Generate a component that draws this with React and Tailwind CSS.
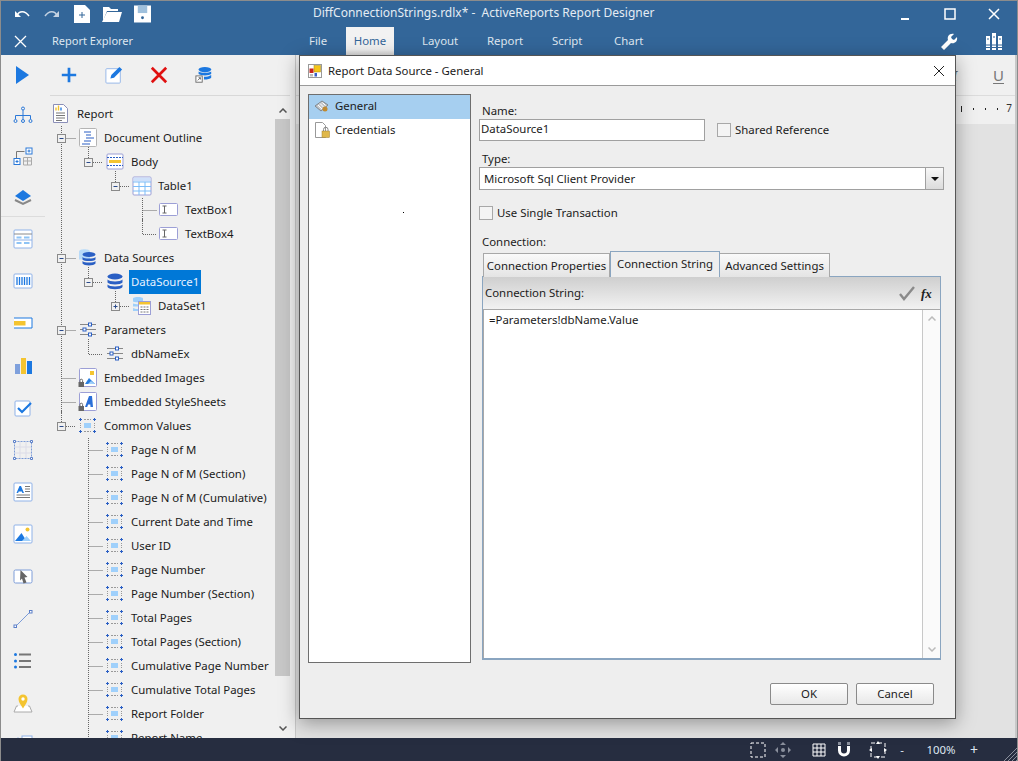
import React from 'react';

const font = "font-['Noto_Sans','Liberation_Sans',sans-serif]";

// tree icons, all drawn on a 20x20 box
const lav = '#9c9fd6';
const blue = '#2a5fc4';
const sky = '#9fd0fb';
const treeIcons = {
  report: (
    <>
      <path d="M2.500 .5h10l4 4v14h-14z" fill="#fff" stroke="#8b8fb8" />
      <path d="M5 6.500v-3M7.500 6.500v-5" stroke="#f4c430" strokeWidth="1.400" />
      <path d="M10 6.500v-3" stroke="#2a7fe0" strokeWidth="1.400" />
      <path d="M5 9h9M5 11.500h9M5 14h9M5 16.500h6" stroke="#777" />
    </>
  ),
  outline: (
    <>
      <rect x="1.500" y=".5" width="17" height="18" rx="1" fill="#fff" stroke="#b4b4b4" />
      <path d="M6 4h7M8 7h5M8 10h8M6 13h7M4 16h8" stroke={blue} strokeWidth="1.200" />
    </>
  ),
  body: (
    <>
      <rect x="2" y="2" width="16" height="15" rx="1" fill="#fff" stroke={lav} />
      <path d="M2 5.500h16M2 13.500h16" stroke={blue} strokeDasharray="2 1" />
      <rect x="4" y="8" width="12" height="3" fill="#f4c430" />
    </>
  ),
  table: (
    <>
      <rect x="1" y="1" width="18" height="18" rx="1" fill="#fff" stroke={lav} />
      <rect x="1.500" y="1.500" width="17" height="4" fill="#cfe0fa" />
      <path d="M1 6h18M1 10.500h18M1 15h18M7 6v13M13 6v13" stroke="#7dbdf8" />
    </>
  ),
  textbox: (
    <>
      <rect x=".5" y="3.500" width="18" height="12" rx="1" fill="#fff" stroke={lav} />
      <path d="M3.500 6h4M3.500 13h4M5.500 6v7" stroke="#666" />
    </>
  ),
  dbs: (
    <>
      <path d="M1 3.500c0-3 11-3 11 0v8H1z" fill={sky} opacity=".7" />
      <ellipse cx="11" cy="6.500" rx="6.500" ry="2.500" fill={blue} />
      <path d="M4.500 9c1.500 2 11.500 2 13 0v2.500c-1.500 2-11.500 2-13 0zM4.500 13c1.500 2 11.500 2 13 0v2.500c-1.500 2.500-11.500 2.500-13 0z" fill={blue} />
    </>
  ),
  db: (
    <>
      <ellipse cx="10" cy="4.500" rx="7.500" ry="3" fill={blue} />
      <path d="M2.500 7.500c1.500 2.500 13.500 2.500 15 0v3c-1.500 2.500-13.500 2.500-15 0zM2.500 12.500c1.500 2.500 13.500 2.500 15 0v2.500c-1.500 3-13.500 3-15 0z" fill={blue} />
    </>
  ),
  dataset: (
    <>
      <path d="M1 2.500c0-2 10-2 10 0v3c0 1-10 1-10 0zM1 7.500c2 1 8 1 10 0v3H1zM1 12c2 1 4 1 5 1v2H1z" fill={sky} />
      <rect x="6.500" y="5.500" width="12" height="13" fill="#fff" stroke={lav} />
      <rect x="7" y="6" width="11" height="2.500" fill="#f4c430" />
      <path d="M8.500 11h8M8.500 13.500h8M8.500 16h8" stroke="#777" strokeDasharray="2 1" />
    </>
  ),
  params: (
    <>
      <path d="M2 4.500h9M14 4.500h4M2 9.500h3M8 9.500h10M2 14.500h9M14 14.500h4" stroke="#888" />
      <rect x="10.500" y="3" width="3" height="3" fill="#fff" stroke={blue} />
      <rect x="5" y="8" width="3" height="3" fill="#fff" stroke={blue} />
      <rect x="10.500" y="13" width="3" height="3" fill="#fff" stroke={blue} />
    </>
  ),
  images: (
    <>
      <rect x="1.500" y=".5" width="17" height="18" rx="1" fill="#fff" stroke={lav} />
      <rect x="12" y="3" width="4" height="4" fill="#f4c430" />
      <path d="M7 16l4-6 6 6z" fill="#2a7fe0" />
      <path d="M10 16l3-3 4 3z" fill={sky} />
      <rect x=".5" y="14" width="5.500" height="5" fill="#666" />
      <path d="M2 14v-1.500a1.300 1.300 0 012.600 0V14" fill="none" stroke="#666" />
    </>
  ),
  sheets: (
    <>
      <rect x="1.500" y=".5" width="17" height="18" rx="1" fill="#fff" stroke={lav} />
      <path d="M7 15l4-11h3l1 11h-2.500l-.2-2.500h-2.200L9.200 15z" fill="#2a6fd8" />
      <rect x=".5" y="14" width="5.500" height="5" fill="#666" />
      <path d="M2 14v-1.500a1.300 1.300 0 012.600 0V14" fill="none" stroke="#666" />
    </>
  ),
  value: (
    <>
      <path d="M1 3.500h3M2.500 2v3M15 3.500h3M16.500 2v3M1 15.500h3M2.500 14v3M15 15.500h3M16.500 14v3" stroke={blue} />
      <path d="M6 3.500h7M6 15.500h7" stroke="#999" strokeDasharray="2 1" />
      <path d="M2.500 7v5M16.500 7v5" stroke="#999" strokeDasharray="1 1" />
      <rect x="6" y="7" width="7" height="5" fill={sky} />
    </>
  ),
};

function TreeIcon({ name }) {
  return (
    <svg className="w-5 h-5 shrink-0 overflow-visible" viewBox="0 0 20 20">
      {treeIcons[name]}
    </svg>
  );
}

// one 27px column of the tree lines: v = through, t = tee, e = elbow
function Guide({ kind, box }) {
  return (
    <svg className="w-[27px] h-6 shrink-0 overflow-visible" viewBox="0 0 27 24">
      <g stroke="#666" strokeDasharray="1 1" fill="none">
        {kind === 'v' && <path d="M13.500 0v24" />}
        {kind === 't' && <path d="M13.500 0v24M13.500 12.500H28" />}
        {kind === 'e' && <path d="M13.500 -3v15.500H28" />}
      </g>
      {box && (
        <g>
          <rect x="9.500" y="8.500" width="8" height="8" fill="#f0f0f0" stroke="#8a8a8a" />
          <path d="M11.500 12.500h4" stroke="#2a4a8a" />
          {box === '+' && <path d="M13.500 10.500v4" stroke="#2a4a8a" />}
        </g>
      )}
    </svg>
  );
}

const tree = [
  { g: [], icon: 'report', text: 'Report' },
  { g: ['t'], box: '-', icon: 'outline', text: 'Document Outline' },
  { g: ['v', 'e'], box: '-', icon: 'body', text: 'Body' },
  { g: ['v', '', 'e'], box: '-', icon: 'table', text: 'Table1' },
  { g: ['v', '', '', 't'], icon: 'textbox', text: 'TextBox1' },
  { g: ['v', '', '', 'e'], icon: 'textbox', text: 'TextBox4' },
  { g: ['t'], box: '-', icon: 'dbs', text: 'Data Sources' },
  { g: ['v', 'e'], box: '-', icon: 'db', text: 'DataSource1', selected: true },
  { g: ['v', '', 'e'], box: '+', icon: 'dataset', text: 'DataSet1' },
  { g: ['t'], box: '-', icon: 'params', text: 'Parameters' },
  { g: ['v', 'e'], icon: 'params', text: 'dbNameEx' },
  { g: ['t'], icon: 'images', text: 'Embedded Images' },
  { g: ['t'], icon: 'sheets', text: 'Embedded StyleSheets' },
  { g: ['e'], box: '-', icon: 'value', text: 'Common Values' },
  ...[
    'Page N of M',
    'Page N of M (Section)',
    'Page N of M (Cumulative)',
    'Current Date and Time',
    'User ID',
    'Page Number',
    'Page Number (Section)',
    'Total Pages',
    'Total Pages (Section)',
    'Cumulative Page Number',
    'Cumulative Total Pages',
    'Report Folder',
    'Report Name',
  ].map((text) => ({ g: ['', 't'], icon: 'value', text })),
];

function TreeRow({ row }) {
  return (
    <div className="flex items-center h-6 shrink-0">
      {row.g.map((kind, i) => (
        <Guide key={i} kind={kind} box={i === row.g.length - 1 ? row.box : null} />
      ))}
      <div className="ml-[3px]">
        <TreeIcon name={row.icon} />
      </div>
      <span
        className={
          row.selected
            ? 'ml-[4px] px-[2px] h-6 leading-6 bg-[#0078d7] text-[#e8f2ff] whitespace-nowrap'
            : 'ml-[6px] whitespace-nowrap text-[#1b1b1b]'
        }
      >
        {row.text}
      </span>
    </div>
  );
}

// left rail drawings on a 20x20 box
const railIcons = [
  <path key="a" d="M3 1l13 9-13 9z" fill="#1c78e0" />,
  <g key="b" fill="none" stroke="#2a78d8">
    <circle cx="10" cy="2.500" r="1.500" />
    <path d="M10 4v5M2.500 13V9.500h15V13M10 9v4" />
    <circle cx="2.500" cy="15" r="1.500" />
    <circle cx="10" cy="15" r="1.500" />
    <circle cx="17.500" cy="15" r="1.500" />
  </g>,
  <g key="c" fill="none">
    <path d="M3.500 12V5.500h8" stroke="#777" />
    <rect x="13" y="2" width="6" height="6" stroke="#2a78d8" fill="#fff" />
    <rect x="1" y="12.500" width="6" height="6" stroke="#2a78d8" fill="#fff" />
    <path d="M14.500 5h3M16 3.500v3M2.500 15.500h3M4 14v3" stroke="#2a78d8" />
    <path d="M10.500 11.500h8v7.500h-8zM14.500 11.500v7.500M10.500 15h8" stroke="#aaa" />
  </g>,
  <g key="d">
    <path d="M2 13l8 4 8-4" fill="none" stroke="#888" strokeWidth="2" />
    <path d="M10 3l8 6-8 5-8-5z" fill="#1c78e0" />
  </g>,
  <g key="e">
    <rect x="1" y="1" width="18" height="18" rx="1" fill="#fff" stroke="#8fb2e8" />
    <path d="M1 5h18" stroke="#8a8a8a" />
    <path d="M3.500 8.500h5M11 8.500h5.500M3.500 14h5M11 14h5.500" stroke="#8fc4f5" strokeWidth="2" />
    <path d="M1 11h18" stroke="#8fb2e8" />
  </g>,
  <g key="f">
    <rect x="1" y="3" width="18" height="14" rx="1" fill="#fff" stroke="#8fb2e8" />
    <path d="M4 6v8M6.500 6v8M9 6v8M11.500 6v8M14 6v8M16.500 6v8" stroke="#1c78e0" strokeWidth="1.300" />
  </g>,
  <g key="g">
    <path d="M1 5h18v10H1" fill="#fff" stroke="#1c78e0" />
    <rect x="1" y="8" width="11.500" height="4.500" fill="#f4c430" />
  </g>,
  <g key="h">
    <rect x="2" y="8" width="5" height="10" fill="#7fa0dc" />
    <rect x="8" y="2" width="5" height="16" fill="#f4c430" />
    <rect x="14" y="5" width="5" height="13" fill="#1c78e0" />
  </g>,
  <g key="i">
    <rect x="2" y="3" width="15" height="15" rx="1" fill="#fff" stroke="#8fb2e8" />
    <path d="M5 10l4 4 9-9" fill="none" stroke="#1c78e0" strokeWidth="2.200" />
  </g>,
  <g key="j" fill="none">
    <rect x="1.500" y="1.500" width="17" height="17" stroke="#7c9cd8" strokeDasharray="2 1" />
    <path d="M7 2v16M13 2v16M2 7h16M2 13h16" stroke="#dcdce8" />
    <path d="M.5.500h2v2h-2zM17.500.500h2v2h-2zM.5 17.500h2v2h-2zM17.500 17.500h2v2h-2z" stroke="#5b7fc8" fill="#fff" />
  </g>,
  <g key="k">
    <rect x="1" y="1" width="18" height="18" rx="1" fill="#fff" stroke="#8fb2e8" />
    <path d="M3.500 11l3-7h1.500l3 7h-1.600l-.6-1.500H5.700L5.100 11z" fill="#1c78e0" />
    <path d="M12 4.500h5M12 7h5M12 9.500h5M3.500 13h13.500M3.500 15.500h13.500" stroke="#777" />
  </g>,
  <g key="l">
    <rect x="1" y="1" width="18" height="18" rx="1" fill="#fff" stroke="#8fb2e8" />
    <circle cx="14.500" cy="5.500" r="2" fill="#f4c430" />
    <path d="M2 17l6.500-8 5 8z" fill="#1c78e0" />
    <path d="M9 17l4.500-5 4.500 5z" fill="#9fd0fb" />
  </g>,
  <g key="m">
    <rect x="1" y="3" width="18" height="13" rx="1.500" fill="#fff" stroke="#7c9cd8" />
    <path d="M7.500 3l7 7-3 .5 2 5-3 1-1.500-5-2 2z" fill="#666" />
  </g>,
  <g key="n" fill="none">
    <path d="M3 17L17 3" stroke="#7c9cd8" />
    <rect x="1" y="16" width="2.500" height="2.500" stroke="#5b7fc8" fill="#fff" />
    <rect x="16.500" y="1.500" width="2.500" height="2.500" stroke="#5b7fc8" fill="#fff" />
  </g>,
  <g key="o">
    <circle cx="2.500" cy="3.500" r="1.500" fill="#1c78e0" />
    <circle cx="2.500" cy="10" r="1.500" fill="#1c78e0" />
    <circle cx="2.500" cy="16" r="1.500" fill="#1c78e0" />
    <path d="M6 3.500h12M6 10h12M6 16h12" stroke="#777" strokeWidth="2" />
  </g>,
  <g key="p">
    <path d="M5 13H3.500L1 19h18l-2.500-6H15" fill="#fff" stroke="#aaa" />
    <path d="M10 15.500C8 12 5.500 9.500 5.500 6a4.500 4.500 0 019 0c0 3.500-2.500 6-4.500 9.500z" fill="#f4c430" />
    <circle cx="10" cy="6" r="1.700" fill="#fff" />
  </g>,
  <g key="q">
    <rect x="9" y="1" width="10" height="8" fill="#fff" stroke="#8fb2e8" />
    <path d="M1 8l4-6 4 6z" fill="#8fb2e8" />
  </g>,
];

function Tool({ children }) {
  return (
    <svg className="w-[18px] h-[18px]" viewBox="0 0 20 20">
      {children}
    </svg>
  );
}

function Check({ className }) {
  return <span className={'w-[14px] h-[14px] border border-[#a8a8a8] bg-[#f4f4f4] block ' + className} />;
}

function Dialog() {
  return (
    <div className="absolute left-[298px] top-[54px] w-[657px] h-[664px] flex flex-col bg-[#eeeeee] border border-[#555] shadow-[0_4px_18px_rgba(0,0,0,0.35)] text-[#1b1b1b]">
      <div className="h-[30px] shrink-0 bg-white border-b border-[#9a9a9a] flex items-center pl-[8px] pr-[10px]">
        <svg className="w-[14px] h-[14px]" viewBox="0 0 14 14">
          <rect x=".5" y=".5" width="13" height="13" fill="#fff" stroke="#999" />
          <rect x="6" y="1.500" width="6.500" height="6.500" fill="#f5c518" stroke="#a88a10" strokeWidth=".5" />
          <rect x="1.500" y="4.500" width="4" height="4.500" fill="#c8251d" />
          <rect x="6.500" y="9" width="2.500" height="3.500" fill="#3a5fc8" />
          <rect x="2" y="10" width="3" height="2.500" fill="#bbb" />
        </svg>
        <span className="ml-[6px]">Report Data Source - General</span>
        <svg className="ml-auto w-3 h-3" viewBox="0 0 12 12">
          <path d="M1 1l10 10M11 1L1 11" stroke="#222" fill="none" />
        </svg>
      </div>
      <div className="flex-1 flex pl-[8px] pt-[8px] min-h-0">
        <div className="w-[163px] h-[569px] shrink-0 bg-white border border-[#6e6e6e] flex flex-col">
          <div className="h-6 shrink-0 bg-[#a6cff0] flex items-center pl-[5px] pb-[2px]">
            <svg className="w-[16px] h-[16px]" viewBox="0 0 16 16">
              <path d="M1 8l7-5 6 4-7 6z" fill="#c4c8cc" stroke="#80868c" />
              <path d="M4 7l4 4M6 5.500l4 4M8.500 4.500l3 3" stroke="#fff" />
              <circle cx="11" cy="11" r="2.500" fill="#c08a30" />
            </svg>
            <span className="ml-[5px]">General</span>
          </div>
          <div className="h-6 shrink-0 flex items-center pl-[5px] pb-[2px]">
            <svg className="w-[16px] h-[16px]" viewBox="0 0 16 16">
              <path d="M1.500 .5h7l3 3v12h-10z" fill="#fff" stroke="#999" />
              <rect x="8" y="9" width="7.500" height="6.500" fill="#e0b84a" stroke="#a08030" strokeWidth=".5" />
              <path d="M9.500 9V7.500a2.200 2.200 0 014.500 0V9" fill="none" stroke="#888" />
            </svg>
            <span className="ml-[5px]">Credentials</span>
          </div>
          <div className="ml-[94px] mt-[69px] w-px h-px bg-black" />
        </div>
        <div className="flex-1 pl-[8px] flex flex-col min-w-0">
          <div className="pl-[3px] h-[17px] leading-[17px] mt-[8px]">Name:</div>
          <div className="flex items-center">
            <div className="w-[226px] h-[22px] bg-white border border-[#a0a0a0] pl-[1px] leading-[18px]">DataSource1</div>
            <Check className="ml-[12px]" />
            <span className="ml-[4px]">Shared Reference</span>
          </div>
          <div className="pl-[3px] h-[17px] leading-[17px] mt-[9px]">Type:</div>
          <div className="w-[465px] h-[23px] bg-white border border-[#a0a0a0] flex items-center pl-[4px] justify-between">
            <span>Microsoft Sql Client Provider</span>
            <span className="w-[18px] h-full border-l border-[#a0a0a0] bg-gradient-to-b from-[#f8f8f8] to-[#dcdcdc] flex items-center justify-center">
              <svg className="w-2 h-1" viewBox="0 0 8 4">
                <path d="M0 0h8L4 4z" fill="#111" />
              </svg>
            </span>
          </div>
          <div className="flex items-center mt-[16px] h-[14px]">
            <Check />
            <span className="ml-[4px]">Use Single Transaction</span>
          </div>
          <div className="pl-[3px] h-[17px] leading-[17px] mt-[13px]">Connection:</div>
          <div className="flex items-end ml-[4px] h-[25px] mt-[2px] relative z-10 -mb-px">
            <div className="w-[127px] h-[24px] border border-[#a8a8a8] border-b-0 bg-gradient-to-b from-[#fafafa] to-[#e4e4e4] flex items-center justify-center">Connection Properties</div>
            <div className="w-[110px] h-[26px] pb-[2px] border border-[#8aa5c0] border-b-0 bg-[#eeeeee] flex items-center justify-center">Connection String</div>
            <div className="w-[110px] h-[24px] border border-[#a8a8a8] border-b-0 border-l-0 bg-gradient-to-b from-[#fafafa] to-[#e4e4e4] flex items-center justify-center">Advanced Settings</div>
          </div>
          <div className="ml-[3px] w-[459px] h-[384px] shrink-0 border border-[#8aa5c0] border-b-2 flex flex-col">
            <div className="h-[32px] shrink-0 bg-gradient-to-b from-[#cfcfcf] to-[#f2f2f2] flex items-center pl-[2px] pr-[6px]">
              <span>Connection String:</span>
              <svg className="ml-auto w-[16px] h-[16px]" viewBox="0 0 16 16">
                <path d="M1 9l4 5L15 2" fill="none" stroke="#8a8a8a" strokeWidth="2.400" />
              </svg>
              <span className="ml-[6px] w-[13px] font-['Liberation_Serif',serif] italic font-bold text-[13px] leading-none text-[#222]">fx</span>
            </div>
            <div className="flex-1 flex bg-white border-t border-l border-[#a8a8a8] min-h-0">
              <div className="flex-1 pl-[5px] pt-[1px] border-r border-[#c8c8c8]">=Parameters!dbName.Value</div>
              <div className="w-[17px] shrink-0 flex flex-col justify-between items-center py-[6px] bg-[#fafafa]">
                <svg className="w-2 h-[5px]" viewBox="0 0 8 5">
                  <path d="M.5 4.500L4 1l3.500 3.500" fill="none" stroke="#bbb" strokeWidth="1.500" />
                </svg>
                <svg className="w-2 h-[5px]" viewBox="0 0 8 5">
                  <path d="M.5.500L4 4 7.500.500" fill="none" stroke="#bbb" strokeWidth="1.500" />
                </svg>
              </div>
            </div>
          </div>
          <div className="flex gap-2 ml-[291px] mt-[23px]">
            <button className="w-[78px] h-[22px] rounded-[2px] border border-[#8a8a8a] bg-gradient-to-b from-white to-[#e8e8e8]">OK</button>
            <button className="w-[78px] h-[22px] rounded-[2px] border border-[#8a8a8a] bg-gradient-to-b from-white to-[#e8e8e8]">Cancel</button>
          </div>
        </div>
      </div>
    </div>
  );
}

export default function App() {
  return (
    <div className={font + ' relative w-[1018px] h-[761px] flex flex-col overflow-hidden border border-[#8c8c8c] border-b-0 text-[11.4px] bg-[#f0f0f0]'}>
      {/* title row */}
      <div className="h-[26px] shrink-0 bg-[#336699] flex items-center text-[#e4ecf4]">
        <div className="flex items-center w-[312px] pl-[13px]">
          <svg className="w-4 h-4" viewBox="0 0 16 16">
            <path d="M3 9.500C5 4.500 11 4 15 10" fill="none" stroke="#fff" strokeWidth="1.500" />
            <path d="M1 5l6 6H1z" fill="#fff" />
          </svg>
          <svg className="ml-[14px] w-4 h-4" viewBox="0 0 16 16">
            <path d="M13 9.500C11 4.500 5 4 1 10" fill="none" stroke="#c4d2e2" strokeWidth="1.500" />
            <path d="M15 5l-6 6h6z" fill="#c4d2e2" />
          </svg>
          <svg className="ml-[14px] w-[16px] h-[18px]" viewBox="0 0 16 18">
            <path d="M0 0h11l5 5v13H0z" fill="#fff" />
            <path d="M5 10h6M8 7v6" stroke="#336699" />
          </svg>
          <svg className="ml-[12px] w-5 h-[18px]" viewBox="0 0 20 18">
            <path d="M1 5V2h6l2 2h7v2H5L1 16z" fill="#fff" />
            <path d="M5 7h15l-3 10H0z" fill="#fff" />
          </svg>
          <svg className="ml-[12px] w-[17px] h-[18px]" viewBox="0 0 18 18">
            <path d="M0 0h18v18H0z" fill="#fff" />
            <rect x="4" y="0" width="10" height="8" fill="#9fc0dc" />
            <circle cx="9" cy="13" r="1.500" fill="#336699" />
          </svg>
        </div>
        <span className="text-[12px] whitespace-pre pb-[3px]">DiffConnectionStrings.rdlx* -  ActiveReports Report Designer</span>
        <div className="ml-auto flex items-center gap-[32px] pr-[17px]">
          <svg className="w-[12px] h-[12px]" viewBox="0 0 12 12">
            <path d="M1 11h8" stroke="#fff" strokeWidth="2" />
          </svg>
          <svg className="w-[12px] h-[12px]" viewBox="0 0 12 12">
            <rect x="1" y="1" width="10" height="10" fill="none" stroke="#fff" strokeWidth="1.500" />
          </svg>
          <svg className="w-[12px] h-[12px]" viewBox="0 0 12 12">
            <path d="M1 1l10 10M11 1L1 11" stroke="#fff" strokeWidth="1.500" />
          </svg>
        </div>
      </div>
      {/* ribbon tabs */}
      <div className="h-[28px] shrink-0 bg-[#336699] flex items-center text-[#dfe7f0]">
        <div className="w-[308px] flex items-center pl-[13px]">
          <svg className="w-[13px] h-[13px]" viewBox="0 0 13 13">
            <path d="M1 1l11 11M12 1L1 12" stroke="#fff" strokeWidth="1.300" />
          </svg>
          <span className="ml-[25px] text-[11px]">Report Explorer</span>
        </div>
        <span className="w-[37px]">File</span>
        <span className="w-[48px] h-full bg-gradient-to-b from-[#f2f2f2] from-80% to-[#d8d8d8] text-[#336699] flex items-center justify-center">Home</span>
        <span className="ml-[28px] w-[65px]">Layout</span>
        <span className="w-[65px]">Report</span>
        <span className="w-[62px]">Script</span>
        <span>Chart</span>
        <div className="ml-auto flex items-center gap-[27px] pr-[14px]">
          <svg className="w-[18px] h-[18px]" viewBox="0 0 18 18">
            <path d="M1 15l7-7c-1-3 1-7 6-6l-3 3 1 2 2 1 3-3c1 5-3 7-6 6l-7 7z" fill="#fff" />
          </svg>
          <svg className="w-[18px] h-[18px]" viewBox="0 0 18 18">
            <path d="M1 4h4v14H1zM7 1h4v17H7zM13 4h4v14h-4z" fill="#fff" />
            <path d="M1 13h16M1 15.500h16M2 7h2M8 5h2M14 7h2" stroke="#336699" />
          </svg>
        </div>
      </div>
      {/* main area */}
      <div className="flex-1 flex min-h-0">
        <div className="w-[44px] shrink-0 flex flex-col overflow-hidden">
          {railIcons.map((icon, i) => (
            <React.Fragment key={i}>
              <div className={i < 4 ? 'h-[40.5px] shrink-0 flex items-center justify-center' : 'h-[42.2px] shrink-0 flex items-center justify-center'}>
                <svg className="w-5 h-5" viewBox="0 0 20 20">
                  {icon}
                </svg>
              </div>
              {i === 3 && <div className="h-px -mt-[1px] mb-[1px] bg-[#dcdcdc] shrink-0" />}
            </React.Fragment>
          ))}
        </div>
        <div className="w-[242px] shrink-0 flex flex-col min-h-0 ml-[3px]">
          <div className="h-[41px] shrink-0 ml-[2px] border-b border-[#d8d8d8] flex items-center pl-[10px] gap-[27px]">
            <Tool>
              <path d="M10 2v16M2 10h16" stroke="#1c78e0" strokeWidth="3" />
            </Tool>
            <Tool>
              <rect x="1" y="3" width="16" height="16" rx="1" fill="#fff" stroke="#8fb2e8" />
              <path d="M6 14l1-4 9-9 3 3-9 9z" fill="#1c78e0" />
            </Tool>
            <Tool>
              <path d="M2 2l16 16M18 2L2 18" stroke="#e01010" strokeWidth="3" />
            </Tool>
            <Tool>
              <ellipse cx="11" cy="4" rx="7" ry="3" fill="#1c78e0" />
              <path d="M4 6c2 2 12 2 14 0v3c-2 2-12 2-14 0zM10 12c3 0 6-.5 8-2v3c-1 1-4 2-8 2z" fill="#1c78e0" />
              <rect x="1" y="11" width="7" height="7" fill="#fff" stroke="#666" />
              <path d="M3 16l3-3M4 13h2v2" stroke="#666" fill="none" />
            </Tool>
          </div>
          <div className="flex-1 flex min-h-0">
            <div className="w-[227px] shrink-0 flex flex-col overflow-hidden pt-[6px]">
              {tree.map((row) => (
                <TreeRow key={row.text} row={row} />
              ))}
            </div>
            {/* scrollbar */}
            <div className="w-[15px] shrink-0 mt-[6px] flex flex-col">
              <div className="h-[17px] shrink-0 flex items-center justify-center">
                <svg className="w-2 h-[5px]" viewBox="0 0 8 5">
                  <path d="M.5 4.500L4 1l3.500 3.500" fill="none" stroke="#555" strokeWidth="1.500" />
                </svg>
              </div>
              <div className="h-[557px] shrink-0 bg-[#c8c8c8]" />
              <div className="flex-1 flex items-end justify-center pb-[7px]">
                <svg className="w-2 h-[5px]" viewBox="0 0 8 5">
                  <path d="M.5.500L4 4 7.500.500" fill="none" stroke="#555" strokeWidth="1.500" />
                </svg>
              </div>
            </div>
          </div>
        </div>
        {/* designer surface behind the dialog */}
        <div className="flex-1 flex flex-col border-l border-r-2 border-[#c8c8c8] ml-[5px] min-w-0">
          <div className="h-[41px] shrink-0 bg-[#f0f0f0] border-b border-[#dcdcdc] flex items-center justify-end pr-[11px]">
            <span className="mr-[36px] italic text-[14px] text-[#666]">I</span>
            <span className="underline underline-offset-2 text-[#777] text-[15px]">U</span>
          </div>
          <div className="h-[28px] shrink-0 bg-[#f0f0f0] flex items-center justify-end pr-[3px] pb-[3px]">
            <svg className="w-[37px] h-[6px]" viewBox="0 0 37 6">
              <path d="M.5 0v6M12.500 2v2M24.500 2v2M36.500 2v2" stroke="#222" />
            </svg>
            <span className="ml-[8px] text-[10px] text-[#333]">7</span>
          </div>
          <div className="flex-1 bg-[#e2e2e2]" />
        </div>
      </div>
      {/* status bar */}
      <div className="h-[23px] shrink-0 bg-[#262d40] flex items-center text-[#dfe7f0] relative">
        <div className="ml-auto flex items-center">
          <svg className="w-[16px] h-[16px]" viewBox="0 0 16 16">
            <rect x="1" y="1" width="14" height="14" fill="none" stroke="#fff" strokeDasharray="3 2" />
          </svg>
          <svg className="ml-[9px] w-[16px] h-[16px]" viewBox="0 0 16 16">
            <path d="M8 0l3 3H5zM8 16l3-3H5zM0 8l3-3v6zM16 8l-3-3v6z" fill="#8a8f9c" />
            <circle cx="8" cy="8" r="2" fill="#8a8f9c" />
          </svg>
          <svg className="ml-[21px] w-[14px] h-[14px]" viewBox="0 0 14 14">
            <path d="M1 1h12v12H1zM5 1v12M9 1v12M1 5h12M1 9h12" fill="none" stroke="#fff" />
          </svg>
          <svg className="ml-[11px] w-[14px] h-[16px]" viewBox="0 0 14 16">
            <path d="M2.500 0v3M11.500 0v3" stroke="#8a8f9c" strokeWidth="3" />
            <path d="M2.500 4v4.500a4.500 4.500 0 009 0V4" fill="none" stroke="#fff" strokeWidth="3" />
          </svg>
          <svg className="ml-[18px] w-[18px] h-[18px]" viewBox="0 0 18 18">
            <path d="M2 2h14v14H2z" fill="none" stroke="#fff" strokeDasharray="4 3" />
            <path d="M9 0l2 3H7zM9 18l2-3H7zM0 9l3-2v4zM18 9l-3-2v4z" fill="#fff" />
          </svg>
          <span className="ml-[11px] w-[8px] text-center">-</span>
          <span className="ml-[20px] w-[30px] text-center">100%</span>
          <span className="ml-[13px] mr-[38px] w-[10px] text-center text-[14px]">+</span>
        </div>
        <svg className="absolute right-0 bottom-0 w-[14px] h-[14px]" viewBox="0 0 14 14">
          <path d="M14 1L1 14M14 5l-9 9M14 9l-5 5M14 13l-1 1" stroke="#8a8f9c" />
        </svg>
      </div>
      <Dialog />
    </div>
  );
}
